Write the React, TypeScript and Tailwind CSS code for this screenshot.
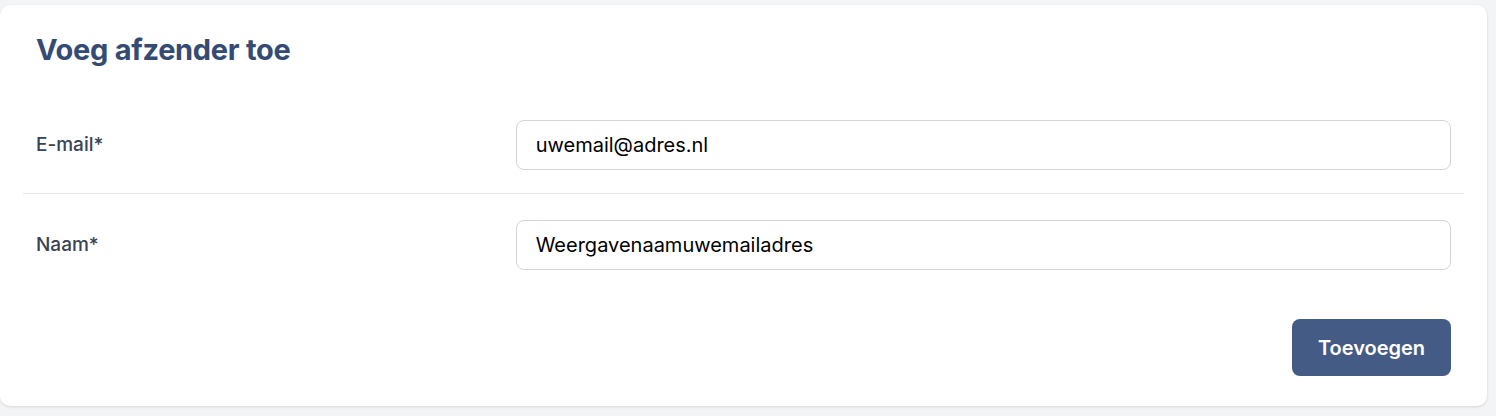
import React from "react";

export default function App() {
  return (
    <div
      className="w-[1496px] h-[416px] bg-[#f3f4f6] pt-[5px] pr-[9px]"
      style={{ fontFamily: "Inter, 'Noto Sans', sans-serif" }}
    >
      <div className="bg-white rounded-[10px] shadow-[0_1px_3px_rgba(0,0,0,0.12)] h-[401px] px-[23px] pt-[29px]">
        <h2 className="px-[13px] text-[29px] leading-[32px] font-bold text-[#344b73] tracking-[-0.3px]">
          Voeg afzender toe
        </h2>
        <div className="mt-[30px]">
          <div className="grid grid-cols-3 gap-6 items-center px-[13px] pt-[24px] pb-[23px] border-b border-[#e5e7eb]">
            <label className="text-[19px] font-medium text-[#3a4252]">E-mail*</label>
            <input
              className="col-span-2 h-[50px] rounded-[8px] border border-[#d4d4d8] pl-[19px] pr-5 text-[20px] text-black outline-none"
              defaultValue="uwemail@adres.nl"
            />
          </div>
          <div className="grid grid-cols-3 gap-6 items-center px-[13px] pt-[26px] pb-[24px]">
            <label className="text-[19px] font-medium text-[#3a4252]">Naam*</label>
            <input
              className="col-span-2 h-[50px] rounded-[8px] border border-[#d4d4d8] pl-[19px] pr-5 text-[20px] text-black outline-none"
              defaultValue="Weergavenaamuwemailadres"
            />
          </div>
          <div className="flex justify-end px-[13px] mt-[25px]">
            <button className="w-[159px] h-[57px] rounded-[8px] bg-[#445b85] text-white text-[20px] font-semibold">
              Toevoegen
            </button>
          </div>
        </div>
      </div>
    </div>
  );
}
